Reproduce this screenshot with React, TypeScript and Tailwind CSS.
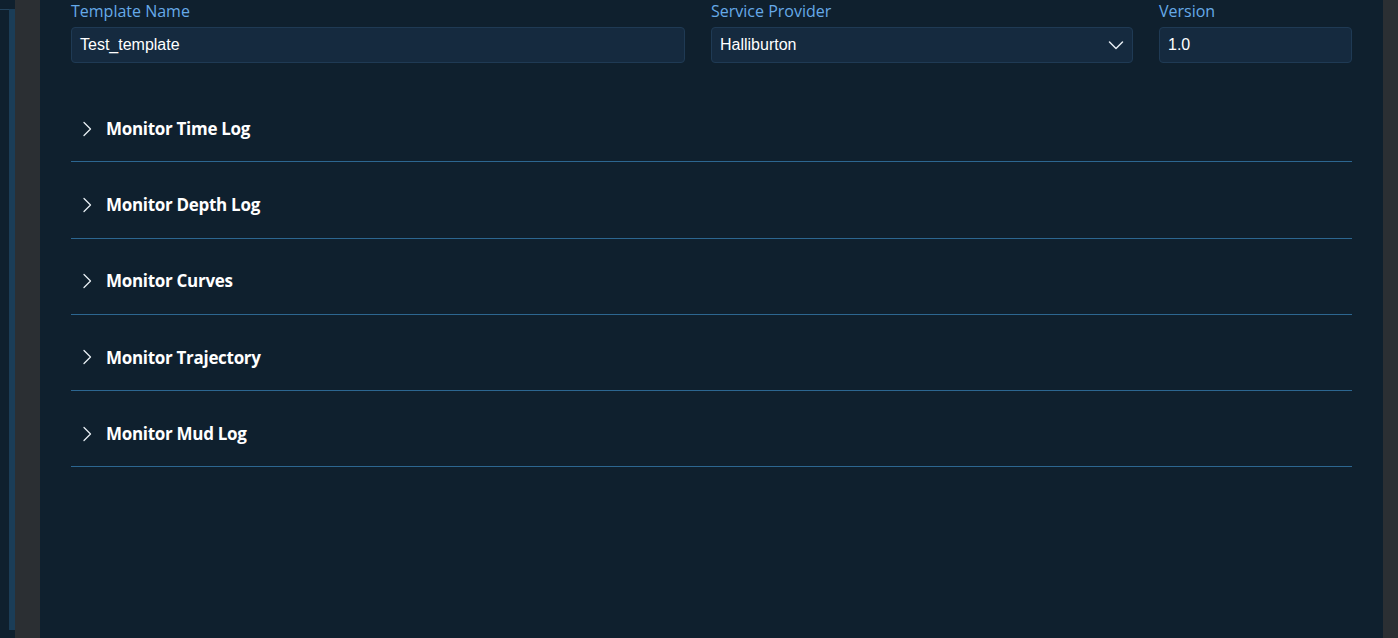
import React from 'react';

// ---------- Data ----------
const SECTIONS = [
  'Monitor Time Log',
  'Monitor Depth Log',
  'Monitor Curves',
  'Monitor Trajectory',
  'Monitor Mud Log',
];

// ---------- Icons ----------
function ChevronRight() {
  return (
    <svg width="12" height="16" viewBox="0 0 12 16" fill="none">
      <path d="M3 1.5 L9.5 8 L3 14.5" stroke="#e6edf3" strokeWidth="1.3" strokeLinecap="round" strokeLinejoin="round" />
    </svg>
  );
}

function ChevronDown() {
  return (
    <svg width="16" height="10" viewBox="0 0 16 10" fill="none">
      <path d="M1.5 2 L8 8.5 L14.5 2" stroke="#e6edf3" strokeWidth="1.5" strokeLinecap="round" strokeLinejoin="round" />
    </svg>
  );
}

// ---------- Pieces ----------
function Field({ label, children, className }: { label: string; children: React.ReactNode; className?: string }) {
  return (
    <div className={`flex flex-col ${className ?? ''}`}>
      <div className="h-[22px] leading-[22px] text-[16px] text-[#66aae8] font-['Open_Sans',sans-serif]">{label}</div>
      <div className="mt-[5px] h-[36px] rounded-[4px] border border-[#1f3a54] bg-[#152a3f] flex items-center px-[8px] text-[16px] text-white font-['Liberation_Sans',Arial,sans-serif]">
        {children}
      </div>
    </div>
  );
}

function Section({ title }: { title: string }) {
  return (
    <div className="pt-[10px] border-b border-[#2c6690]">
      <div className="h-[65.25px] flex items-center pl-[10px] gap-[13px]">
        <ChevronRight />
        <span className="text-[17px] font-bold text-white tracking-[-0.3px] font-['Open_Sans',sans-serif]">{title}</span>
      </div>
    </div>
  );
}

// ---------- App ----------
export default function App() {
  return (
    <div className="h-[638px] w-full flex bg-[#0f202e] overflow-hidden">
      {/* left rail */}
      <div className="w-[15px] shrink-0 flex pt-[9px] pb-[8px]">
        <div className="w-[9px] border-t border-[#24435c]" />
        <div className="w-[6px] bg-[#1b3d57]" />
      </div>
      <div className="w-[25px] shrink-0 bg-[#2b2f33]" />

      {/* main */}
      <div className="flex-1 pl-[31px] pr-[31px]">
        <div className="flex gap-[26px]">
          <Field label="Template Name" className="w-[614px]">Test_template</Field>
          <Field label="Service Provider" className="w-[422px]">
            <span className="flex-1">Halliburton</span>
            <ChevronDown />
          </Field>
          <Field label="Version" className="flex-1">1.0</Field>
        </div>

        <div className="mt-[23px]">
          {SECTIONS.map((s) => (
            <Section key={s} title={s} />
          ))}
        </div>
      </div>

      <div className="w-[15px] shrink-0 bg-[#2b2f33]" />
    </div>
  );
}
